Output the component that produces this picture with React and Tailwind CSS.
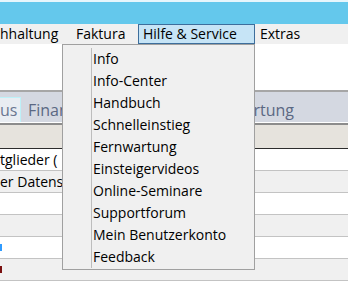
import React from "react";

const menuItems = [
  "Info",
  "Info-Center",
  "Handbuch",
  "Schnelleinstieg",
  "Fernwartung",
  "Einsteigervideos",
  "Online-Seminare",
  "Supportforum",
  "Mein Benutzerkonto",
  "Feedback",
];

const rows = [
  { text: "tglieder (", bg: "bg-white" },
  { text: "er Datens", bg: "bg-[#f0f0f0]" },
  { text: "", bg: "bg-white" },
  { text: "", bg: "bg-[#f0f0f0]" },
  { text: "", bg: "bg-white", mark: "bg-[#2f9bff]" },
  { text: "", bg: "bg-[#f0f0f0]", mark: "bg-[#7a1010]" },
];

const App = () => {
  return (
    <div className="relative w-[348px] h-[291px] overflow-hidden bg-white font-['Open_Sans',sans-serif] text-[14px] text-black">
      {/* title bar */}
      <div className="h-[24px] border-t-2 border-[#e6f6fc] bg-[#64c8ec]" />

      {/* menu bar */}
      <div className="flex h-[20px] bg-[#f0f0f0] leading-[18px]">
        <div className="w-[71px] pt-[1px]">hhaltung</div>
        <div className="w-[67px] pl-[5px] pt-[1px]">Faktura</div>
        <div className="w-[117px] border border-[#3d6e9c] bg-[#c6e4f6] pl-[4px]">
          Hilfe &amp; Service
        </div>
        <div className="flex-1 pl-[5px] pt-[1px]">Extras</div>
      </div>

      {/* empty toolbar area */}
      <div className="h-[46px] bg-white" />

      {/* tab strip */}
      <div className="border-t-2 border-[#a6a6a6]">
        <div className="flex h-[30px] items-end bg-[#d4d8e1] text-[16px] text-[#5b6883]">
          <div className="flex h-[25px] w-[21px] items-center overflow-hidden border-t border-r border-[#bdf1f8] bg-[#e9edf2] text-[#6b7690]">
            us
          </div>
          <div className="flex h-[25px] w-[41px] items-center overflow-hidden whitespace-nowrap pl-[7px]">
            Finanzen
          </div>
          <div className="flex-1" />
          <div className="flex h-[25px] w-[94px] items-center justify-end overflow-hidden whitespace-nowrap pr-[54px]">
            Auswertung
          </div>
        </div>
        <div className="h-[1px] bg-white" />
        <div className="h-[2px] bg-[#8c8c8c]" />
        <div className="h-[23px] bg-[#e6e3dd]" />
        <div className="h-[1px] bg-[#2c2c2c]" />
      </div>

      {/* table rows */}
      {rows.map((row, index) => (
        <div
          key={index}
          className={`flex h-[22px] items-center border-b border-[#c3c3c3] ${row.bg}`}
        >
          {row.mark && <span className={`h-[7px] w-[2px] ${row.mark}`} />}
          {row.text && (
            <span className="w-[62px] overflow-hidden whitespace-nowrap">
              {row.text}
            </span>
          )}
        </div>
      ))}

      {/* dropdown */}
      <div className="absolute left-[62px] top-[44px] w-[193px] border border-[#a0a0a0] bg-[#f0f0f0] py-[2px]">
        <div className="absolute left-[28px] top-[3px] bottom-[1px] w-px bg-[#bdbdbd]" />
        {menuItems.map((item) => (
          <div key={item} className="flex h-[22px] items-center pl-[30px]">
            {item}
          </div>
        ))}
      </div>
    </div>
  );
};

export default App;
